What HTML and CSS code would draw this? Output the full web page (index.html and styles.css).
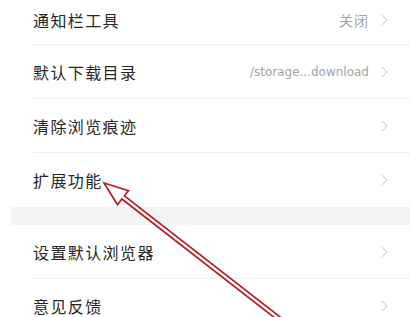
FILE: index.html
```html
<!DOCTYPE html>
<html lang="zh">
<head>
<meta charset="utf-8">
<link rel="stylesheet" href="styles.css">
</head>
<body>
<div class="page">
  <div class="group">
    <div class="row first">
      <span class="label">通知栏工具</span>
      <span class="value cjk">关闭</span>
      <svg class="chev" width="7" height="12" viewBox="0 0 7 12"><polyline points="1,1 6,6 1,11"/></svg>
    </div>
    <div class="row">
      <span class="label">默认下载目录</span>
      <span class="value path">/storage...download</span>
      <svg class="chev" width="7" height="12" viewBox="0 0 7 12"><polyline points="1,1 6,6 1,11"/></svg>
    </div>
    <div class="row">
      <span class="label">清除浏览痕迹</span>
      <svg class="chev" width="7" height="12" viewBox="0 0 7 12"><polyline points="1,1 6,6 1,11"/></svg>
    </div>
    <div class="row last">
      <span class="label">扩展功能</span>
      <svg class="chev" width="7" height="12" viewBox="0 0 7 12"><polyline points="1,1 6,6 1,11"/></svg>
    </div>
  </div>
  <div class="band"></div>
  <div class="group">
    <div class="row">
      <span class="label">设置默认浏览器</span>
      <svg class="chev" width="7" height="12" viewBox="0 0 7 12"><polyline points="1,1 6,6 1,11"/></svg>
    </div>
    <div class="row last">
      <span class="label">意见反馈</span>
      <svg class="chev" width="7" height="12" viewBox="0 0 7 12"><polyline points="1,1 6,6 1,11"/></svg>
    </div>
  </div>
  <svg class="arrow" width="410" height="317" viewBox="0 0 410 317">
    <polygon points="104,183 128.5,190.6 124.4,195.8 303,334.8 300.6,338 121.9,199 117.5,204.8"/>
  </svg>
</div>
</body>
</html>
```
FILE: styles.css
```css
html, body {
  margin: 0;
  padding: 0;
  background: #ffffff;
}
.page {
  position: relative;
  width: 410px;
  height: 317px;
  overflow: hidden;
  background: #ffffff;
  font-family: "Noto Sans CJK SC", "Noto Sans", sans-serif;
}
.group {
  display: flex;
  flex-direction: column;
}
.row {
  box-sizing: border-box;
  display: flex;
  align-items: center;
  height: 54px;
  margin-left: 33px;
  padding-right: 22px;
  border-bottom: 1px solid #efefef;
}
.row.first {
  height: 45px;
  padding-bottom: 4px;
}
.row.last {
  border-bottom: none;
}
.label {
  flex: 1;
  font-size: 16px;
  letter-spacing: 1.4px;
  color: #262626;
}
.value {
  margin-right: 12px;
  color: #a3a3a3;
}
.value.cjk {
  font-size: 14px;
  letter-spacing: 1px;
}
.value.path {
  font-family: "DejaVu Sans", sans-serif;
  font-size: 12px;
}
.chev {
  display: block;
}
.chev polyline {
  fill: none;
  stroke: #dadada;
  stroke-width: 1.2;
}
.band {
  height: 18px;
  margin-left: 11px;
  background: #f4f4f6;
}
.arrow {
  position: absolute;
  left: 0;
  top: 0;
}
.arrow polygon {
  fill: none;
  stroke: #b01e26;
  stroke-width: 1.7;
  stroke-linejoin: miter;
}
```
